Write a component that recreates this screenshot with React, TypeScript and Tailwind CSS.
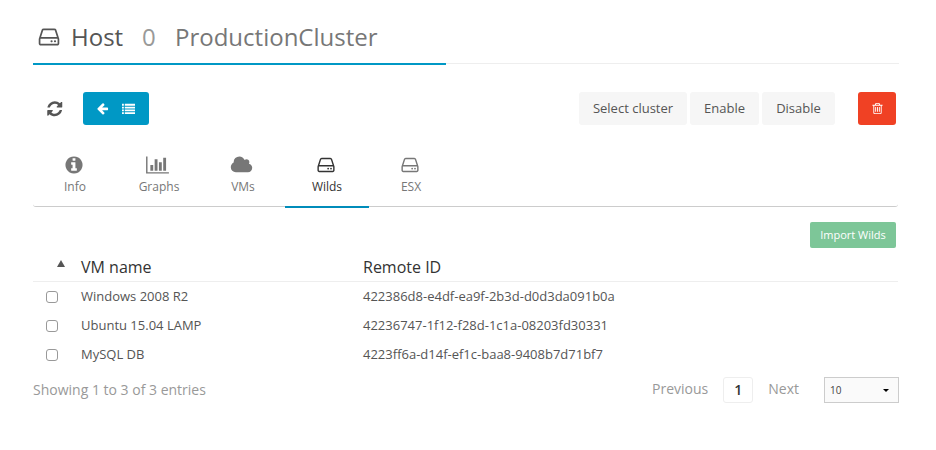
import type { ReactNode } from "react";

const paths = {
  hdd: "M1168 1216q0 33-23.5 56.5t-56.5 23.5-56.5-23.5-23.5-56.5 23.5-56.5 56.5-23.5 56.5 23.5 23.5 56.5zm256 0q0 33-23.5 56.5t-56.5 23.5-56.5-23.5-23.5-56.5 23.5-56.5 56.5-23.5 56.5 23.5 23.5 56.5zm112 160v-320q0-13-9.5-22.5t-22.5-9.5h-1216q-13 0-22.5 9.5t-9.5 22.5v320q0 13 9.5 22.5t22.5 9.5h1216q13 0 22.5-9.5t9.5-22.5zm-1230-480h1180l-157-482q-4-13-16-21.5t-26-8.5h-782q-14 0-26 8.5t-16 21.5zm1358 160v320q0 66-47 113t-113 47h-1216q-66 0-113-47t-47-113v-320q0-25 16-75l197-606q17-53 63-86t101-33h782q55 0 101 33t63 86l197 606q16 50 16 75z",
  refresh:
    "M1639 1056q0 5-1 7-64 268-268 434.5t-478 166.5q-146 0-282.5-55t-243.5-157l-129 129q-19 19-45 19t-45-19-19-45v-448q0-26 19-45t45-19h448q26 0 45 19t19 45-19 45l-137 137q71 66 161 102t187 36q134 0 250-65t186-179q11-17 53-117 8-23 30-23h192q13 0 22.5 9.5t9.5 22.5zm25-800v448q0 26-19 45t-45 19h-448q-26 0-45-19t-19-45 19-45l138-138q-148-137-349-137-134 0-250 65t-186 179q-11 17-53 117-8 23-30 23h-199q-13 0-22.5-9.5t-9.5-22.5v-7q65-268 270-434.5t480-166.5q146 0 284 55.5t245 156.5l130-129q19-19 45-19t45 19 19 45z",
  back: "M1664 896v128q0 53-32.5 90.5t-84.5 37.5h-704l293 294q38 36 38 90t-38 90l-75 76q-37 37-90 37-52 0-91-37l-651-652q-37-37-37-90 0-52 37-91l651-650q38-38 91-38 52 0 90 38l75 74q38 38 38 91t-38 91l-293 293h704q52 0 84.5 37.5t32.5 90.5z",
  list: "M0 256h256v256H0zM384 256h1408v256H384zM0 640h256v256H0zM384 640h1408v256H384zM0 1024h256v256H0zM384 1024h1408v256H384zM0 1408h256v256H0zM384 1408h1408v256H384z",
  trash:
    "M704 736v576q0 14-9 23t-23 9h-64q-14 0-23-9t-9-23v-576q0-14 9-23t23-9h64q14 0 23 9t9 23zm256 0v576q0 14-9 23t-23 9h-64q-14 0-23-9t-9-23v-576q0-14 9-23t23-9h64q14 0 23 9t9 23zm256 0v576q0 14-9 23t-23 9h-64q-14 0-23-9t-9-23v-576q0-14 9-23t23-9h64q14 0 23 9t9 23zm128 724v-948h-896v948q0 22 7 40.5t14.5 27 10.5 8.5h832q3 0 10.5-8.5t14.5-27 7-40.5zm-672-1076h448l-48-117q-7-9-17-11h-317q-10 2-17 11zm928 32v64q0 14-9 23t-23 9h-96v948q0 83-47 143.5t-113 60.5h-832q-66 0-113-58.5t-47-141.5v-952h-96q-14 0-23-9t-9-23v-64q0-14 9-23t23-9h309l70-167q15-37 54-63t79-26h320q40 0 79 26t54 63l70 167h309q14 0 23 9t9 23z",
  info: "M1152 1376v-160q0-14-9-23t-23-9h-96v-512q0-14-9-23t-23-9h-320q-14 0-23 9t-9 23v160q0 14 9 23t23 9h96v320h-96q-14 0-23 9t-9 23v160q0 14 9 23t23 9h448q14 0 23-9t9-23zm-128-896v-160q0-14-9-23t-23-9h-192q-14 0-23 9t-9 23v160q0 14 9 23t23 9h192q14 0 23-9t9-23zm640 416q0 209-103 385.5t-279.5 279.5-385.5 103-385.5-103-279.5-279.5-103-385.5 103-385.5 279.5-279.5 385.5-103 385.5 103 279.5 279.5 103 385.5z",
  chart:
    "M640 896v512h-256v-512h256zm384-512v1024h-256v-1024h256zm1024 1152v128h-2048v-1536h128v1408h1920zm-640-896v768h-256v-768h256zm384-384v1152h-256v-1152h256z",
  cloud:
    "M1984 1152q0 159-112.5 271.5t-271.5 112.5h-1088q-185 0-316.5-131.5t-131.5-316.5q0-132 71-241.5t187-163.5q-2-28-2-43 0-212 150-362t362-150q158 0 286.5 88t187.5 230q70-62 166-62 106 0 181 75t75 181q0 75-41 138 129 30 213 134.5t84 239.5z",
};

type IconName = keyof typeof paths;

function Icon({ name, className, wide = false }: { name: IconName; className: string; wide?: boolean }) {
  return (
    <svg viewBox={wide ? "0 0 2048 1792" : "0 0 1792 1792"} fill="currentColor" className={`shrink-0 ${className}`}>
      <path d={paths[name]} />
    </svg>
  );
}

const tabs: { label: string; icon: IconName; wide?: boolean; active?: boolean }[] = [
  { label: "Info", icon: "info" },
  { label: "Graphs", icon: "chart", wide: true },
  { label: "VMs", icon: "cloud", wide: true },
  { label: "Wilds", icon: "hdd", active: true },
  { label: "ESX", icon: "hdd" },
];

const rows = [
  { name: "Windows 2008 R2", id: "422386d8-e4df-ea9f-2b3d-d0d3da091b0a" },
  { name: "Ubuntu 15.04 LAMP", id: "42236747-1f12-f28d-1c1a-08203fd30331" },
  { name: "MySQL DB", id: "4223ff6a-d14f-ef1c-baa8-9408b7d71bf7" },
];

function GreyButton({ width, children }: { width: string; children: ReactNode }) {
  return (
    <button className={`h-[33px] rounded-[3px] bg-[#f6f6f6] text-[13px] text-[#555] ${width}`}>{children}</button>
  );
}

export default function App() {
  return (
    <div className="h-[450px] w-[936px] overflow-hidden bg-white pl-[33px] pr-[37px] font-['Open_Sans',sans-serif] text-[#555]">
      <header className="flex h-[65px] flex-col">
        <h1 className="flex h-[63px] items-center pt-[11px] pb-px text-[24px] leading-[32px]">
          <Icon name="hdd" className="ml-[3.5px] h-6 w-6" />
          <span className="ml-[10.5px] w-[71px]">Host</span>
          <span className="w-[33px] text-[#999]">0</span>
          <span className="text-[#777]">ProductionCluster</span>
        </h1>
        <div className="flex h-[2px] shrink-0">
          <div className="w-[413px] bg-[#0098c5]" />
          <div className="h-px flex-1 bg-[#eee]" />
        </div>
      </header>

      <div className="mt-[27px] flex h-[33px] items-center">
        <Icon name="refresh" className="ml-[13px] h-[17.5px] w-[17.5px]" />
        <button className="ml-[19.5px] flex h-[33px] w-[66px] items-center rounded-[3px] bg-[#0098c5] pl-[13px] text-white">
          <Icon name="back" className="h-[13px] w-[13px]" />
          <Icon name="list" className="mb-px ml-[13px] h-[13px] w-[13px]" />
        </button>
        <div className="ml-auto flex gap-[3px]">
          <GreyButton width="w-[108px]">Select cluster</GreyButton>
          <GreyButton width="w-[69px]">Enable</GreyButton>
          <GreyButton width="w-[73px]">Disable</GreyButton>
        </div>
        <button className="ml-[23px] mr-[3px] flex h-[33px] w-[38px] items-center justify-center rounded-[3px] bg-[#f04124] text-white">
          <Icon name="trash" className="h-[13px] w-[13px]" />
        </button>
      </div>

      <nav className="mt-[22px] flex h-[60px] w-[865px] rounded-[3px] border-b border-[#ccc]">
        {tabs.map((tab) => (
          <a
            key={tab.label}
            className={`flex h-[61px] w-[84px] flex-col items-center pt-[8px] ${
              tab.active ? "text-[#333] shadow-[inset_0_-2px_0_#008cba]" : "text-[#777]"
            }`}
          >
            <Icon name={tab.icon} wide={tab.wide} className={`mr-[3px] h-5 ${tab.wide ? "w-[23px]" : "w-5"}`} />
            <span className="mt-[3px] text-[12px] leading-[18px]">{tab.label}</span>
          </a>
        ))}
      </nav>

      <div className="mt-[15px] flex justify-end pr-[3px]">
        <button className="h-[26px] w-[86px] rounded-[2px] bg-[#7dc698] text-[11px] text-white">Import Wilds</button>
      </div>

      <table className="mt-[5px] w-[865px] table-fixed border-collapse text-left">
        <thead>
          <tr className="h-[28px] border-b border-[#eee] text-[16px] text-[#333]">
            <th className="w-[48px] p-0">
              <span className="mb-[6px] ml-[24px] block h-0 w-0 border-x-[4px] border-b-[7px] border-x-transparent border-b-[#555]" />
            </th>
            <th className="w-[282px] p-0 pt-px font-normal">VM name</th>
            <th className="p-0 pt-px font-normal">Remote ID</th>
          </tr>
        </thead>
        <tbody className="text-[13px]">
          {rows.map((row) => (
            <tr key={row.id} className="h-[29px]">
              <td className="p-0">
                <input
                  type="checkbox"
                  className="ml-[13px] mt-[2px] block h-3 w-3 appearance-none rounded-[3px] border border-[#999] bg-white"
                />
              </td>
              <td className="p-0 pt-[2px]">{row.name}</td>
              <td className="p-0 pt-[2px]">{row.id}</td>
            </tr>
          ))}
        </tbody>
      </table>

      <footer className="mt-[9px] flex h-[26px] w-[866px] items-center text-[14px] text-[#999]">
        <span className="pb-[2px]">Showing 1 to 3 of 3 entries</span>
        <span className="ml-auto pb-[4px]">Previous</span>
        <span className="ml-[15px] flex h-[26px] w-[30px] items-center justify-center rounded-[3px] border border-[#eee] pb-px font-semibold text-[#333]">
          1
        </span>
        <span className="ml-[15px] pb-[4px]">Next</span>
        <button className="ml-[25px] flex h-[26px] w-[75px] items-center justify-between border border-[#ccc] bg-[#fafafa] pl-[5px] pr-[9px] text-[10px] text-[#444]">
          10
          <span className="h-0 w-0 border-x-[3px] border-t-[3px] border-x-transparent border-t-black" />
        </button>
      </footer>
    </div>
  );
}
